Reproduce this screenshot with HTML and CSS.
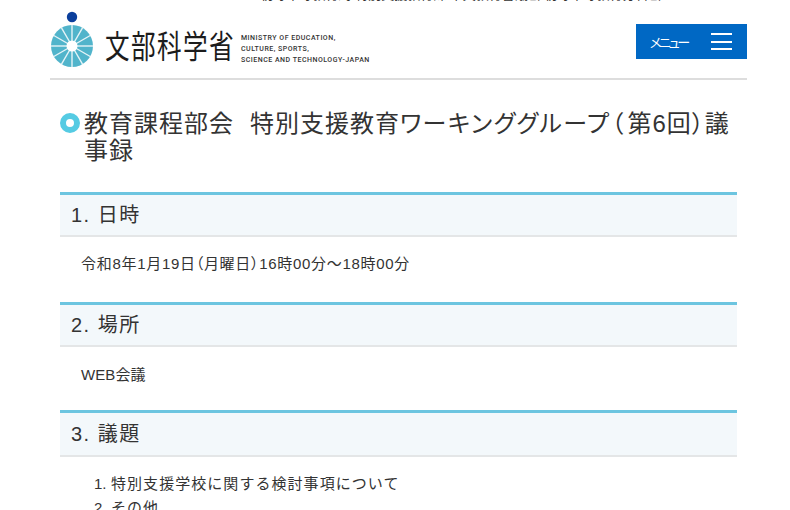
FILE: index.html

```html
<!DOCTYPE html>
<html lang="ja">
<head>
  <meta charset="UTF-8" />
  <meta name="viewport" content="width=device-width, initial-scale=1.0" />
  <title>特別支援教育ワーキンググループ(第6回)議事録</title>
  <link rel="stylesheet" href="styles.css">
</head>
<body>
  <div class="topbar"><span>初等中等教育局 特別支援教育課 中央教育審議会 初等中等教育分科会</span></div>

  <header class="header">
    <a class="logo" href="#">
      <svg class="logo-mark" width="44" height="56" viewBox="0 0 44 56">
        <circle cx="22" cy="6" r="5.2" fill="#0b3f9c" />
        <circle cx="22" cy="35" r="21" fill="#51b4cb" />
        <g stroke="#ffffff" stroke-width="1.4" opacity="0.85">
          <line x1="22" y1="35" x2="22" y2="14" />
          <line x1="22" y1="35" x2="32.5" y2="16.8" />
          <line x1="22" y1="35" x2="40.2" y2="24.5" />
          <line x1="22" y1="35" x2="43" y2="35" />
          <line x1="22" y1="35" x2="40.2" y2="45.5" />
          <line x1="22" y1="35" x2="32.5" y2="53.2" />
          <line x1="22" y1="35" x2="22" y2="56" />
          <line x1="22" y1="35" x2="11.5" y2="53.2" />
          <line x1="22" y1="35" x2="3.8" y2="45.5" />
          <line x1="22" y1="35" x2="1" y2="35" />
          <line x1="22" y1="35" x2="3.8" y2="24.5" />
          <line x1="22" y1="35" x2="11.5" y2="16.8" />
        </g>
        <circle cx="22" cy="35" r="5.5" fill="#ffffff" />
      </svg>
      <span class="logo-name">文部科学省</span>
      <span class="logo-en">MINISTRY OF EDUCATION,<br>CULTURE, SPORTS,<br>SCIENCE AND TECHNOLOGY-JAPAN</span>
    </a>
    <button class="menu-btn" type="button">
      <span class="menu-label">メニュー</span>
      <span class="menu-bars"><i></i><i></i><i></i></span>
    </button>
  </header>

  <main class="content">
    <h1 class="page-title">教育課程部会&ensp;&#8202;特別支援教育<span class="tight kana">ワーキンググループ</span><span class="tight paren-open">（</span>第6回<span class="tight">）</span>議事録</h1>

    <h2 class="section-title">1. 日時</h2>
    <p class="section-text">令和8年1月19日<span class="tight">（</span>月曜日<span class="tight">）</span>16時00分～18時00分</p>

    <h2 class="section-title">2. 場所</h2>
    <p class="section-text section-text-short">WEB会議</p>

    <h2 class="section-title section-title-tall">3. 議題</h2>
    <ol class="agenda">
      <li>特別支援学校に関する検討事項について</li>
      <li>その他</li>
    </ol>
  </main>
</body>
</html>
```

FILE: styles.css

```css
html, body {
  height: 100%;
  overflow: hidden;
}

body {
  font-family: 'Liberation Sans', 'Noto Sans CJK JP', sans-serif;
  background: #fff;
  color: #333;
  margin: 0;
}

.topbar {
  height: 3px;
  overflow: hidden;
  display: flex;
  justify-content: center;
  align-items: flex-end;
  font-size: 13px;
  line-height: 16px;
  color: #333;
  white-space: nowrap;
  padding-left: 132px;
}

.header {
  width: 697px;
  height: 75px;
  margin-left: 50px;
  border-bottom: 2px solid #ddd;
  display: flex;
  justify-content: space-between;
}

.logo {
  display: flex;
  color: #222;
  text-decoration: none;
  padding: 8px 0 0;
}

.logo-mark {
  flex: none;
}

.logo-name {
  width: 130px;
  font-size: 30px;
  line-height: 34px;
  letter-spacing: 1.7px;
  margin: 20px 0 0 11px;
  transform: scale(0.82, 1.06);
  transform-origin: left center;
  white-space: nowrap;
  color: #1c1c1c;
}

.logo-en {
  font-family: 'Roboto', sans-serif;
  font-size: 7px;
  line-height: 11px;
  font-weight: 500;
  letter-spacing: 0.5px;
  margin: 22px 0 0 6px;
  white-space: nowrap;
  color: #333;
}

.menu-btn {
  width: 111px;
  height: 35px;
  margin: 21px 0 0;
  padding: 0 15px 0 13px;
  border: none;
  background: #0068c4;
  color: #fff;
  font-family: inherit;
  display: flex;
  align-items: center;
  justify-content: space-between;
}

.menu-label {
  font-size: 13px;
  letter-spacing: -3.6px;
}

.menu-bars {
  width: 21px;
  height: 17px;
  display: flex;
  flex-direction: column;
  justify-content: space-between;
}

.menu-bars i {
  display: block;
  height: 2px;
  background: #fff;
}

.content {
  margin: 0 53px 0 60px;
}

.page-title {
  font-size: 24px;
  line-height: 27px;
  font-weight: 400;
  letter-spacing: 1px;
  margin: 30px 0 28px;
  padding-left: 24px;
  position: relative;
  color: #333;
}

.page-title::before {
  content: "";
  position: absolute;
  left: 0;
  top: 3px;
  width: 8px;
  height: 8px;
  border: 6px solid #55cbe3;
  border-radius: 50%;
  background: #fff;
}

.tight {
  font-feature-settings: "palt";
}

.kana {
  letter-spacing: 1.4px;
}

.paren-open {
  margin: 0 3px 0 1px;
}

.section-title {
  font-size: 20px;
  line-height: 40px;
  height: 40px;
  font-weight: 400;
  letter-spacing: 1.5px;
  margin: 0;
  padding-left: 11px;
  border-top: 3px solid #6cc5e0;
  border-bottom: 2px solid #e4e6e7;
  background: #f3f8fb;
  color: #333;
}

.section-title-tall {
  height: 42px;
  line-height: 42px;
}

.section-text {
  font-size: 15px;
  line-height: 24px;
  letter-spacing: 0.7px;
  margin: 15px 0 26px 21px;
}

.section-text-short {
  letter-spacing: 0.1px;
  margin-top: 16px;
  margin-bottom: 23px;
}

.agenda {
  font-size: 15px;
  line-height: 24px;
  letter-spacing: 1.05px;
  margin: 15px 0 0;
  padding-left: 34px;
  list-style: none;
  counter-reset: item;
}

.agenda li {
  counter-increment: item;
  display: flex;
}

.agenda li::before {
  content: counter(item) ".";
  width: 17px;
  flex: none;
  letter-spacing: 0;
}
```
